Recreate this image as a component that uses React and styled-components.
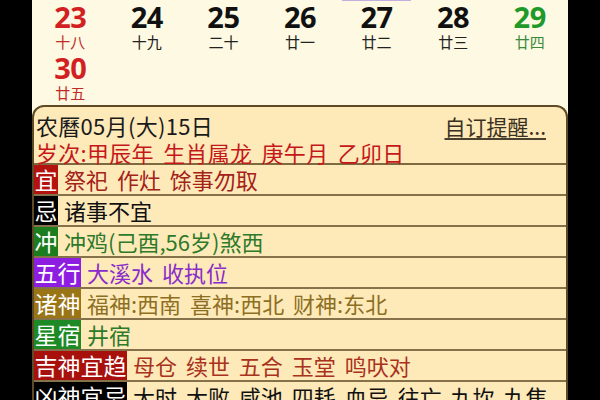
import React from "react";
import styled, { createGlobalStyle } from "styled-components";

const GlobalStyle = createGlobalStyle`
  html, body {
    margin: 0;
    padding: 0;
    background: #000;
  }
  body {
    font-family: "Noto Sans CJK SC", "Noto Sans", sans-serif;
  }
`

const Screen = styled.div`
  width: 600px;
  height: 400px;
  overflow: hidden;
  display: flex;
  background: #000;
`

const Side = styled.div`
  width: 32px;
  flex: none;
  background: #000;
`

const Page = styled.div`
  width: 536px;
  flex: none;
  background: #fdf9e2;
  display: flex;
  flex-direction: column;
`

const TopStrip = styled.div`
  display: grid;
  grid-template-columns: repeat(7, 1fr);
  height: 4px;
`

const Tab = styled.div`
  grid-column: ${p => p.col};
  margin: 0 4px;
  background: #e8dcf4;
  border: 1px solid #c3aee0;
  border-top: none;
  border-radius: 0 0 4px 4px;
`

const DayGrid = styled.div`
  display: grid;
  grid-template-columns: repeat(7, 1fr);
  row-gap: 2px;
`

const Day = styled.div`
  display: flex;
  flex-direction: column;
  align-items: center;
  color: ${p => p.color};
`

const DayNum = styled.div`
  font-family: "Noto Sans", "Roboto", sans-serif;
  font-weight: 700;
  font-size: 29px;
  line-height: 32px;
  letter-spacing: -0.5px;
`

const Lunar = styled.div`
  font-size: 15px;
  line-height: 17px;
  color: ${p => p.color};
`

const Panel = styled.div`
  margin-top: 4px;
  flex: 1;
  background: #fee9b9;
  border: 2px solid #5e4b26;
  border-bottom: none;
  border-radius: 12px 12px 0 0;
  display: flex;
  flex-direction: column;
`

const Header = styled.div`
  padding: 4px 20px 0 2px;
  border-bottom: 2px solid #7d6a3e;
  height: 58px;
  box-sizing: border-box;
`

const HeaderLine = styled.div`
  display: flex;
  justify-content: space-between;
  align-items: center;
  font-size: 22px;
  line-height: 26px;
  color: ${p => p.color || "#1a1a1a"};
  word-spacing: 4px;
  letter-spacing: 0.3px;
`

const Remind = styled.span`
  color: #3a3020;
  font-size: 21px;
  letter-spacing: 0;
  text-decoration: underline;
  text-decoration-color: #4a4030;
  text-underline-offset: 3px;
  margin-top: 2px;
`

const Row = styled.div`
  display: flex;
  align-items: stretch;
  height: 31px;
  box-sizing: border-box;
  border-bottom: 2px solid #85724a;
`

const Label = styled.div`
  background: ${p => p.bg};
  color: #fff;
  font-size: 23px;
  line-height: 29px;
  padding: 0 0.5px;
  flex: none;
`

const Value = styled.div`
  color: ${p => p.color};
  font-size: 22px;
  line-height: 29px;
  padding-left: 6px;
  word-spacing: 4px;
  white-space: nowrap;
`

const days = [
  { n: "23", l: "十八", c: "#d21f22", lc: "#c22a2a" },
  { n: "24", l: "十九", c: "#111", lc: "#222" },
  { n: "25", l: "二十", c: "#111", lc: "#222" },
  { n: "26", l: "廿一", c: "#111", lc: "#222" },
  { n: "27", l: "廿二", c: "#111", lc: "#222" },
  { n: "28", l: "廿三", c: "#111", lc: "#222" },
  { n: "29", l: "廿四", c: "#1f9a2a", lc: "#3a8a3e" },
  { n: "30", l: "廿五", c: "#d21f22", lc: "#c22a2a" },
]

const rows = [
  { label: "宜", bg: "#b3120f", color: "#a3221a", text: "祭祀 作灶 馀事勿取" },
  { label: "忌", bg: "#000", color: "#111", text: "诸事不宜" },
  { label: "冲", bg: "#1c7d1e", color: "#2d7a2a", text: "冲鸡(己酉,56岁)煞西" },
  { label: "五行", bg: "#8d1de0", color: "#8a2cc9", text: "大溪水 收执位" },
  { label: "诸神", bg: "#9a7516", color: "#8c6f22", text: "福神:西南 喜神:西北 财神:东北" },
  { label: "星宿", bg: "#1d8a26", color: "#2d7a2a", text: "井宿" },
  { label: "吉神宜趋", bg: "#a8100c", color: "#a8321c", text: "母仓 续世 五合 玉堂 鸣吠对" },
  { label: "凶神宜忌", bg: "#000", color: "#111", text: "大时 大败 咸池 四耗 血忌 往亡 九坎 九焦" },
]

const App = () => {
  return (
    <>
      <GlobalStyle />
      <Screen>
        <Side />
        <Page>
          <TopStrip>
            <Tab col={5} />
          </TopStrip>
          <DayGrid>
            {days.map(d => (
              <Day key={d.n} color={d.c}>
                <DayNum>{d.n}</DayNum>
                <Lunar color={d.lc}>{d.l}</Lunar>
              </Day>
            ))}
          </DayGrid>
          <Panel>
            <Header>
              <HeaderLine>
                <span>农曆05月(大)15日</span>
                <Remind>自订提醒...</Remind>
              </HeaderLine>
              <HeaderLine color="#c4181a">岁次:甲辰年 生肖属龙 庚午月 乙卯日</HeaderLine>
            </Header>
            {rows.map(r => (
              <Row key={r.label}>
                <Label bg={r.bg}>{r.label}</Label>
                <Value color={r.color}>{r.text}</Value>
              </Row>
            ))}
          </Panel>
        </Page>
        <Side />
      </Screen>
    </>
  )
}

export default App;
